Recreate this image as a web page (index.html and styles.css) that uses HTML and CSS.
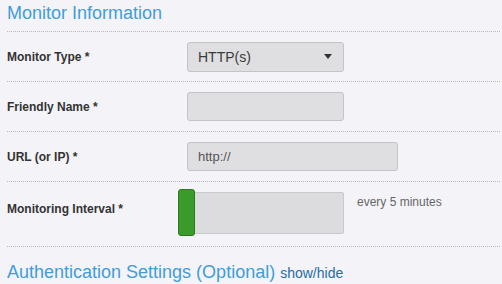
FILE: index.html
```html
<!DOCTYPE html>
<html>
<head>
<meta charset="utf-8">
<link rel="stylesheet" href="styles.css">
</head>
<body>
<div class="page">
  <h2 class="section-title">Monitor Information</h2>
  <div class="row">
    <label class="label">Monitor Type *</label>
    <div class="field">
      <div class="select"><span>HTTP(s)</span><span class="caret"></span></div>
    </div>
  </div>
  <div class="row">
    <label class="label">Friendly Name *</label>
    <div class="field"><div class="input short"></div></div>
  </div>
  <div class="row">
    <label class="label">URL (or IP) *</label>
    <div class="field"><div class="input long">http://</div></div>
  </div>
  <div class="row tall">
    <label class="label">Monitoring Interval *</label>
    <div class="field slider-field">
      <div class="slider"><div class="handle"></div></div>
      <span class="hint">every 5 minutes</span>
    </div>
  </div>
  <h2 class="section-title bottom">Authentication Settings (Optional) <a class="toggle">show/hide</a></h2>
</div>
</body>
</html>
```

FILE: styles.css
```css
html, body {
  margin: 0;
  padding: 0;
  background: #f4f4f8;
}
body {
  font-family: "Liberation Sans", Arial, sans-serif;
  color: #333;
}
.page {
  padding-left: 7px;
  width: 493px;
}
.section-title {
  margin: 0;
  font-size: 18px;
  font-weight: normal;
  color: #3e9ddb;
  line-height: 20px;
  padding-top: 3px;
  box-sizing: border-box;
  height: 32px;
  border-bottom: 1px dotted #b9b9bd;
}
.section-title.bottom {
  border-bottom: none;
  padding-top: 15px;
  height: auto;
}
.toggle {
  font-size: 14px;
  color: #1f6ea3;
}
.row {
  display: flex;
  align-items: center;
  height: 50px;
  box-sizing: border-box;
  border-bottom: 1px dotted #b9b9bd;
}
.row.tall {
  height: 65px;
  align-items: flex-start;
  padding-top: 7px;
}
.row.tall .label {
  margin-top: 13px;
}
.label {
  width: 180px;
  font-size: 12px;
  font-weight: bold;
  color: #333;
}
.field {
  display: flex;
  align-items: center;
}
.select {
  width: 157px;
  height: 30px;
  box-sizing: border-box;
  border: 1px solid #c4c4c6;
  border-radius: 3px;
  background: #dfdfe1;
  display: flex;
  align-items: center;
  justify-content: space-between;
  padding: 0 11px 0 10px;
  font-size: 14px;
  color: #3a3a3a;
}
.caret {
  width: 0;
  height: 0;
  border-left: 4px solid transparent;
  border-right: 4px solid transparent;
  border-top: 5px solid #333;
}
.input {
  height: 29px;
  box-sizing: border-box;
  border: 1px solid #c4c4c6;
  border-radius: 3px;
  background: #dfdfe1;
  padding: 0 10px;
  font-size: 13px;
  color: #555;
  line-height: 27px;
}
.input.short { width: 157px; }
.input.long { width: 211px; }
.slider-field {
  margin-left: -9px;
  align-items: flex-start;
}
.slider {
  position: relative;
  width: 166px;
  height: 42px;
  margin-top: 3px;
  box-sizing: border-box;
  border: 1px solid #c9c9cb;
  border-radius: 2px;
  background: #dcdcde;
}
.handle {
  position: absolute;
  left: -1px;
  top: -4px;
  width: 17px;
  height: 47px;
  box-sizing: border-box;
  border: 1px solid #2b7a1e;
  border-radius: 3px;
  background: #3a9a2a;
}
.hint {
  margin-left: 13px;
  margin-top: 6px;
  font-size: 12px;
  color: #666;
}
```
